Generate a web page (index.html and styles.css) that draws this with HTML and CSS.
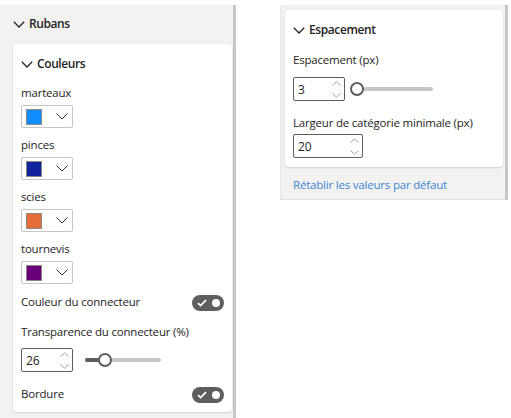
FILE: index.html
```html
<!DOCTYPE html>
<html lang="fr">
<head>
<meta charset="utf-8">
<link rel="stylesheet" href="styles.css">
</head>
<body>
<div class="page">
  <div class="pane pane-left">
    <div class="pane-body left-body">
      <div class="section-head">
        <svg class="chev" width="12" height="7" viewBox="0 0 12 7"><path d="M0.8 0.8 L6 6 L11.2 0.8" fill="none" stroke="#252423" stroke-width="1.3"/></svg>
        <span>Rubans</span>
      </div>
      <div class="card card-left">
        <div class="card-head">
          <svg class="chev" width="12" height="7" viewBox="0 0 12 7"><path d="M0.8 0.8 L6 6 L11.2 0.8" fill="none" stroke="#252423" stroke-width="1.3"/></svg>
          <span>Couleurs</span>
        </div>

        <div class="field">
          <div class="label">marteaux</div>
          <div class="picker"><span class="swatch" style="background:#118DFF"></span><svg class="pchev" width="12" height="7" viewBox="0 0 12 7"><path d="M0.5 0.5 L6 6 L11.5 0.5" fill="none" stroke="#323130" stroke-width="1"/></svg></div>
        </div>
        <div class="field">
          <div class="label">pinces</div>
          <div class="picker"><span class="swatch" style="background:#12239E"></span><svg class="pchev" width="12" height="7" viewBox="0 0 12 7"><path d="M0.5 0.5 L6 6 L11.5 0.5" fill="none" stroke="#323130" stroke-width="1"/></svg></div>
        </div>
        <div class="field">
          <div class="label">scies</div>
          <div class="picker"><span class="swatch" style="background:#E66C37"></span><svg class="pchev" width="12" height="7" viewBox="0 0 12 7"><path d="M0.5 0.5 L6 6 L11.5 0.5" fill="none" stroke="#323130" stroke-width="1"/></svg></div>
        </div>
        <div class="field">
          <div class="label">tournevis</div>
          <div class="picker"><span class="swatch" style="background:#6B007B"></span><svg class="pchev" width="12" height="7" viewBox="0 0 12 7"><path d="M0.5 0.5 L6 6 L11.5 0.5" fill="none" stroke="#323130" stroke-width="1"/></svg></div>
        </div>

        <div class="toggle-row first-toggle">
          <span class="label">Couleur du connecteur</span>
          <span class="toggle"><svg width="10" height="8" viewBox="0 0 10 8"><path d="M1 4.2 L3.6 6.6 L9 1.2" fill="none" stroke="#ffffff" stroke-width="1.8"/></svg><span class="dot"></span></span>
        </div>

        <div class="label slider-label">Transparence du connecteur (%)</div>
        <div class="slider-row">
          <div class="spin"><span>26</span>
            <svg class="arrows" width="9" height="17" viewBox="0 0 9 17"><path d="M0.5 4.5 L4.5 0.8 L8.5 4.5" fill="none" stroke="#a19f9d" stroke-width="1"/><path d="M0.5 12.5 L4.5 16.2 L8.5 12.5" fill="none" stroke="#a19f9d" stroke-width="1"/></svg>
          </div>
          <div class="slider">
            <div class="track"><div class="fill" style="width:26%"></div></div>
            <div class="thumb" style="left:26%"></div>
          </div>
        </div>

        <div class="toggle-row last-toggle">
          <span class="label">Bordure</span>
          <span class="toggle"><svg width="10" height="8" viewBox="0 0 10 8"><path d="M1 4.2 L3.6 6.6 L9 1.2" fill="none" stroke="#ffffff" stroke-width="1.8"/></svg><span class="dot"></span></span>
        </div>
      </div>
    </div>
    <div class="strip"></div>
  </div>

  <div class="pane pane-right">
    <div class="pane-body right-body">
      <div class="card card-right">
        <div class="card-head">
          <svg class="chev" width="12" height="7" viewBox="0 0 12 7"><path d="M0.8 0.8 L6 6 L11.2 0.8" fill="none" stroke="#252423" stroke-width="1.3"/></svg>
          <span>Espacement</span>
        </div>
        <div class="label slider-label first-label">Espacement (px)</div>
        <div class="slider-row">
          <div class="spin"><span>3</span>
            <svg class="arrows" width="9" height="17" viewBox="0 0 9 17"><path d="M0.5 4.5 L4.5 0.8 L8.5 4.5" fill="none" stroke="#a19f9d" stroke-width="1"/><path d="M0.5 12.5 L4.5 16.2 L8.5 12.5" fill="none" stroke="#a19f9d" stroke-width="1"/></svg>
          </div>
          <div class="slider">
            <div class="track"><div class="fill" style="width:0%"></div></div>
            <div class="thumb" style="left:0%"></div>
          </div>
        </div>
        <div class="label plain-label">Largeur de catégorie minimale (px)</div>
        <div class="spin spin-wide"><span>20</span>
          <svg class="arrows" width="9" height="17" viewBox="0 0 9 17"><path d="M0.5 4.5 L4.5 0.8 L8.5 4.5" fill="none" stroke="#a19f9d" stroke-width="1"/><path d="M0.5 12.5 L4.5 16.2 L8.5 12.5" fill="none" stroke="#a19f9d" stroke-width="1"/></svg>
        </div>
      </div>
      <div class="reset">Rétablir les valeurs par défaut</div>
    </div>
    <div class="strip"></div>
  </div>
</div>
</body>
</html>
```

FILE: styles.css
```css
* { box-sizing: border-box; }
html, body { margin: 0; padding: 0; background: #ffffff; }
body {
  font-family: "Open Sans", "Noto Sans", sans-serif;
  font-size: 11.5px;
  letter-spacing: -0.2px;
  color: #252423;
  width: 511px;
  height: 418px;
  overflow: hidden;
}
.page {
  display: flex;
  align-items: flex-start;
  padding-top: 5px;
}
.pane { display: flex; }
.pane-left { width: 236px; height: 413px; }
.pane-right { width: 228px; margin-left: 44px; }
.pane-body { background: #f3f2f1; flex: 1; }
.strip { width: 3px; background: #c8c6c4; }
.left-body { padding: 10px 1px 0 13px; }
.right-body {
  padding: 5px 2px 5px 5px;
  border-bottom: 1px solid #e1dfdd;
  box-shadow: inset 3px 0 3px -2px rgba(0,0,0,0.06);
}

.section-head, .card-head {
  display: flex;
  align-items: center;
  gap: 4px;
  font-size: 12px;
  font-weight: 600;
  letter-spacing: -0.4px;
  line-height: 18px;
  height: 18px;
}
.section-head { margin-bottom: 11px; }

.card {
  background: #ffffff;
  border-radius: 4px;
  box-shadow: 0 1px 2px rgba(0,0,0,0.14), 0 0 1px rgba(0,0,0,0.06);
  padding: 11px 8px 9px 8px;
}
.card-left { height: 368px; }
.card-head { margin-bottom: 12px; }

.label { line-height: 16px; }

.field { margin-bottom: 9px; }
.field .label { margin-bottom: 4px; }
.picker {
  width: 52px;
  height: 23px;
  border: 1px solid #c8c6c4;
  border-radius: 2px;
  display: flex;
  align-items: center;
  padding-left: 4px;
}
.swatch {
  width: 16px;
  height: 16px;
  border: 1px solid #8a8886;
  margin-right: 14px;
}
.pchev { display: block; }

.toggle-row {
  display: flex;
  justify-content: space-between;
  align-items: flex-start;
}
.first-toggle { margin-top: 10px; }
.last-toggle { margin-top: 14px; }
.toggle {
  width: 32px;
  height: 16px;
  border-radius: 8px;
  background: #605e5c;
  display: flex;
  align-items: center;
  justify-content: space-between;
  padding: 0 4px 0 5px;
  margin-top: 1px;
}
.toggle svg { display: block; }
.dot {
  width: 8px;
  height: 8px;
  border-radius: 50%;
  background: #ffffff;
}

.slider-label { margin-top: 13px; margin-bottom: 8px; }
.first-label { margin-top: 13px; margin-bottom: 9px; }
.plain-label { margin-top: 14px; margin-bottom: 3px; }

.slider-row {
  display: flex;
  align-items: center;
  gap: 12px;
}
.spin {
  width: 52px;
  height: 24px;
  border: 1px solid #605e5c;
  border-radius: 2px;
  display: flex;
  align-items: center;
  justify-content: space-between;
  padding: 0 3px 0 4px;
  font-size: 12px;
  letter-spacing: 0;
}
.spin-wide { width: 70px; }
.arrows { display: block; }

.slider {
  position: relative;
  width: 76px;
  height: 14px;
  display: flex;
  align-items: center;
}
.track {
  width: 100%;
  height: 4px;
  border-radius: 2px;
  background: #c8c6c4;
  overflow: hidden;
}
.fill { height: 100%; background: #605e5c; }
.thumb {
  position: absolute;
  top: 0;
  width: 14px;
  height: 14px;
  margin-left: -7px;
  border-radius: 50%;
  background: #ffffff;
  border: 2px solid #605e5c;
}

.reset {
  color: #3a84d4;
  line-height: 16px;
  margin: 10px 0 0 8px;
  padding-bottom: 1px;
}
```
